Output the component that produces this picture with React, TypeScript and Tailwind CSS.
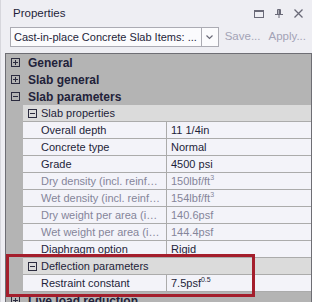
import React from 'react';

type Prop = { name: string; value: React.ReactNode; muted?: boolean };

const slabProps: Prop[] = [
  { name: 'Overall depth', value: '11 1/4in' },
  { name: 'Concrete type', value: 'Normal' },
  { name: 'Grade', value: '4500 psi' },
  { name: 'Dry density (incl. reinf…', value: <>150lbf/ft<sup className="text-[7px]">3</sup></>, muted: true },
  { name: 'Wet density (incl. reinf…', value: <>154lbf/ft<sup className="text-[7px]">3</sup></>, muted: true },
  { name: 'Dry weight per area (i…', value: '140.6psf', muted: true },
  { name: 'Wet weight per area (i…', value: '144.4psf', muted: true },
  { name: 'Diaphragm option', value: 'Rigid' },
];

function BoxIcon({ open }: { open: boolean }) {
  return (
    <svg width="9" height="9" viewBox="0 0 9 9" className="shrink-0">
      <rect x="0.5" y="0.5" width="8" height="8" fill="none" stroke="#2b2b3f" />
      <path d="M2 4.5h5" stroke="#2b2b3f" />
      {!open && <path d="M4.5 2v5" stroke="#2b2b3f" />}
    </svg>
  );
}

function Category({ label, open }: { label: string; open?: boolean }) {
  return (
    <div className="h-[17px] flex items-center bg-[#b4b4b4] pl-[5px] gap-[8px]">
      <BoxIcon open={!!open} />
      <span className="font-bold text-[12px] text-[#22223a] leading-none">{label}</span>
    </div>
  );
}

function SubCategory({ label }: { label: string }) {
  return (
    <div className="h-[17px] flex items-center bg-[#dbdbdb] border-b border-[#ababab] pl-[5px] gap-[4px]">
      <BoxIcon open />
      <span className="text-[11px] text-[#1e1e3a] leading-none">{label}</span>
    </div>
  );
}

function PropRow({ name, value, muted }: Prop) {
  const color = muted ? 'text-[#85859a]' : 'text-[#1e1e3a]';
  return (
    <div className={`h-[17px] flex bg-[#f3f3f9] border-b border-[#ababab] text-[11px] leading-none ${color}`}>
      <div className="w-[144px] shrink-0 flex items-center pl-[18px] pr-[4px] border-r border-[#ababab] whitespace-nowrap overflow-hidden">
        {name}
      </div>
      <div className="flex-1 flex items-center pl-[4px] whitespace-nowrap">{value}</div>
    </div>
  );
}

export default function App() {
  return (
    <div
      className="relative w-[312px] h-[302px] overflow-hidden bg-[#eeeef3] border-l border-[#d6d6dc]"
      style={{ fontFamily: '"Liberation Sans", Arial, sans-serif' }}
    >
      <div className="h-[27px] flex items-center pl-[12px] pr-[9px]">
        <span className="text-[11.5px] text-[#1e1e3a]">Properties</span>
        <div className="ml-auto flex items-center gap-[11px] text-[#6a6a78]">
          <svg width="10" height="8" viewBox="0 0 10 8">
            <rect x="0.5" y="0.5" width="9" height="7" fill="none" stroke="currentColor" />
            <path d="M0 1.5h10" stroke="currentColor" />
          </svg>
          <svg width="8" height="9" viewBox="0 0 8 9">
            <path d="M2.5 0.5v5M5.5 0.5v5M2.5 0.5h3M0 5.5h8M4 5.5v3.5" stroke="currentColor" fill="none" />
            <path d="M3.5 1v4.5h1.5V1" fill="currentColor" />
          </svg>
          <svg width="9" height="9" viewBox="0 0 9 9">
            <path d="M0.5 0.5l8 8M8.5 0.5l-8 8" stroke="currentColor" strokeWidth="1.3" />
          </svg>
        </div>
      </div>
      <div className="h-[20px] flex items-center pl-[9px] pr-[6px]">
        <div className="w-[211px] h-[20px] flex border border-[#ababb3] bg-[#fbfbfd]">
          <div className="flex-1 flex items-center pl-[3px] text-[11px] text-[#1e1e3a] whitespace-nowrap overflow-hidden">
            Cast-in-place Concrete Slab Items: ...
          </div>
          <div className="w-[17px] flex items-center justify-center border-l border-[#ababb3]">
            <svg width="7" height="5" viewBox="0 0 7 5">
              <path d="M0.5 0.5l3 3 3-3" stroke="#6a6a78" fill="none" strokeWidth="1.2" />
            </svg>
          </div>
        </div>
        <span className="ml-[6px] text-[11.5px] text-[#a3a3b6]">Save...</span>
        <span className="ml-[8px] text-[11.5px] text-[#a3a3b6]">Apply...</span>
      </div>
      <div className="mt-[6px] ml-[4px] w-[307px] border-t border-l border-r border-[#6e6e74] bg-[#b4b4b4]">
        <Category label="General" />
        <Category label="Slab general" />
        <Category label="Slab parameters" open />
        <div className="flex">
          <div className="w-[17px] shrink-0 bg-[#b4b4b4]" />
          <div className="flex-1">
            <SubCategory label="Slab properties" />
            {slabProps.map((p) => (
              <PropRow key={p.name} {...p} />
            ))}
            <SubCategory label="Deflection parameters" />
            <PropRow
              name="Restraint constant"
              value={<>7.5psf<sup className="text-[7px]">0.5</sup></>}
            />
          </div>
        </div>
        <Category label="Live load reduction" />
      </div>
      <div className="absolute left-[5px] top-[254px] w-[249px] h-[43px] border-[3px] border-[#a41e2c]" />
    </div>
  );
}
